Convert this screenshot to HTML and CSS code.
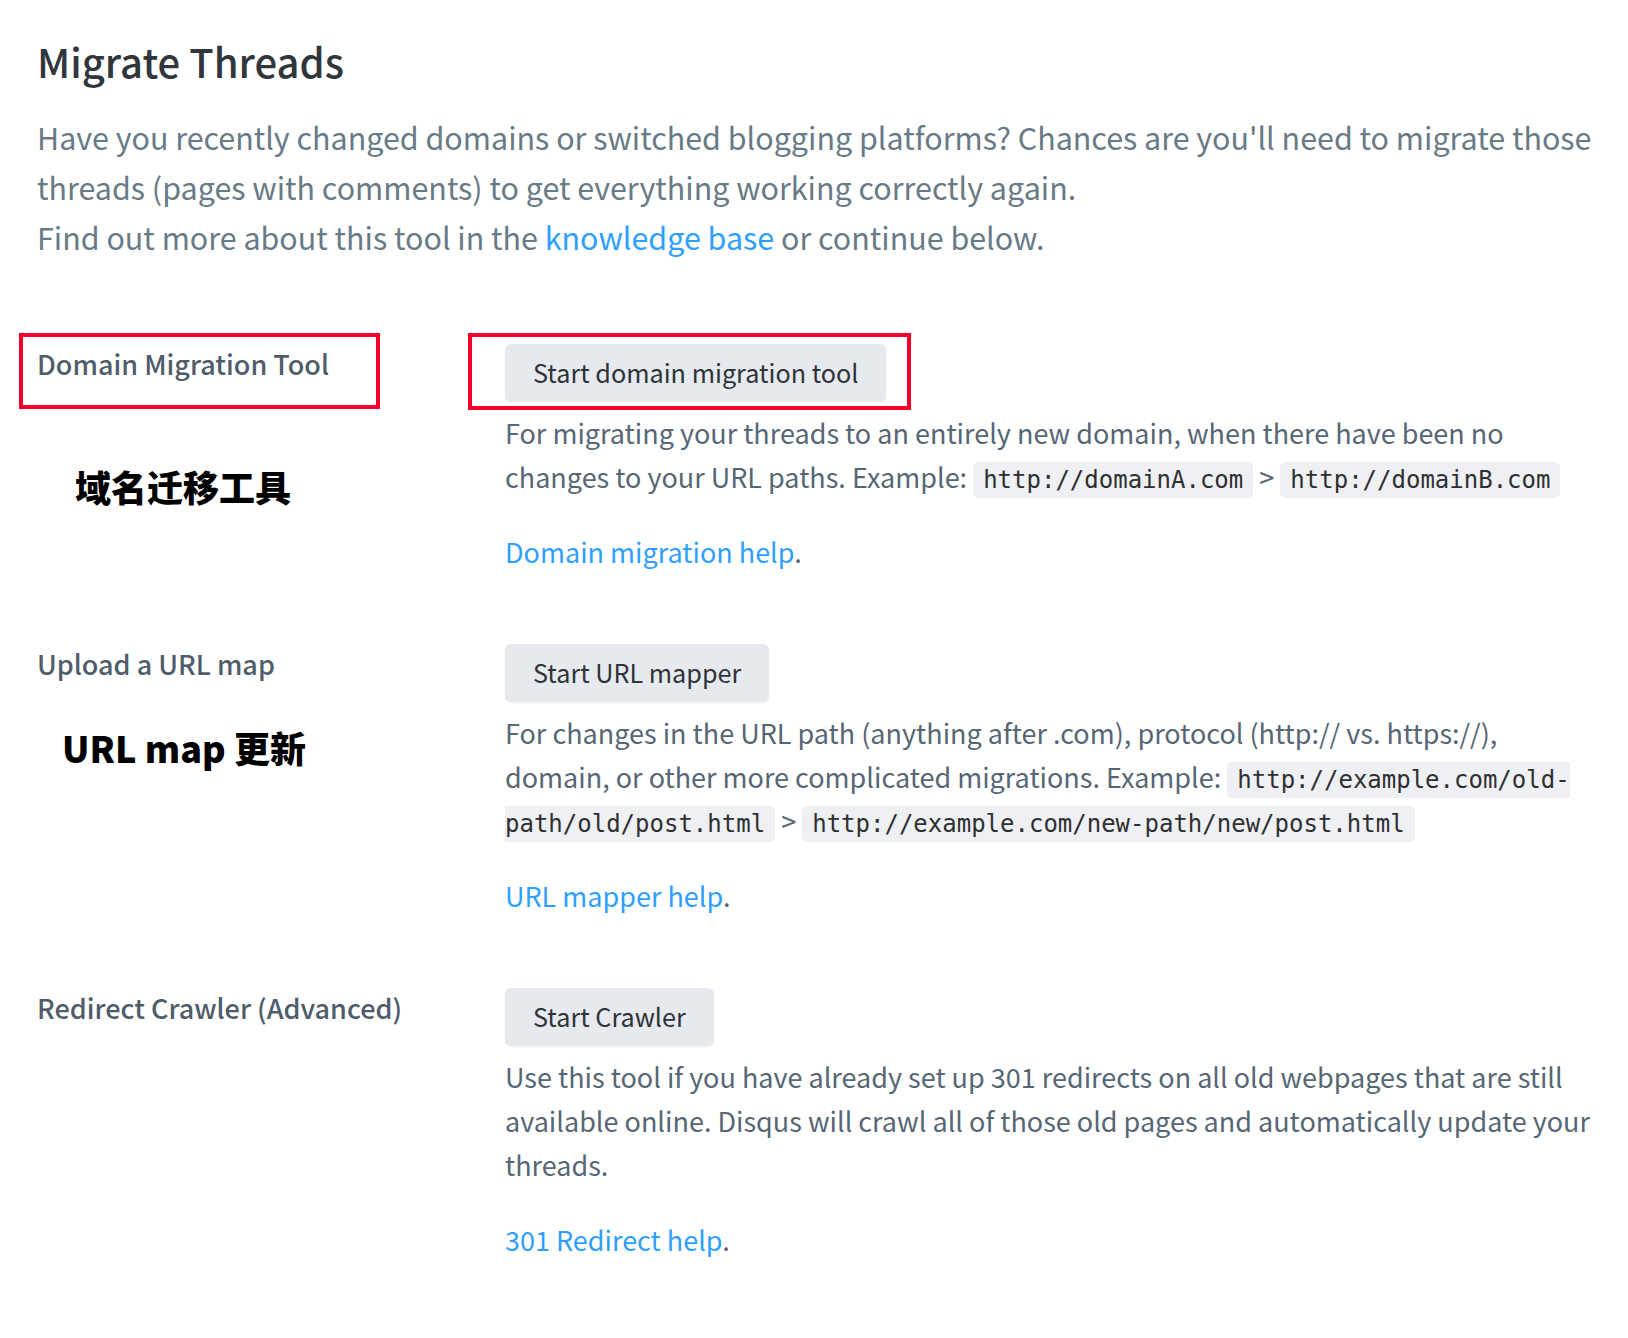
FILE: index.html
```html
<!DOCTYPE html>
<html lang="en">
<head>
<meta charset="utf-8">
<title>Migrate Threads</title>
<link rel="stylesheet" href="styles.css">
</head>
<body>
<div class="page">
  <h1 class="title">Migrate Threads</h1>
  <p class="intro">Have you recently changed domains or switched blogging platforms? Chances are you'll need to migrate those threads (pages with comments) to get everything working correctly again.<br>Find out more about this tool in the <a class="link" href="#">knowledge base</a> or continue below.</p>

  <section class="tool tool-first">
    <div class="label">Domain Migration Tool</div>
    <div class="content">
      <button class="btn" type="button">Start domain migration tool</button>
      <p class="desc">For migrating your threads to an entirely new domain, when there have been no changes to your URL paths. Example: <code class="code">http://domainA.com</code> &gt; <code class="code">http://domainB.com</code></p>
      <p class="help"><a class="link" href="#">Domain migration help</a>.</p>
    </div>
    <div class="mark mark-label"></div>
    <div class="mark mark-btn"></div>
    <div class="note note-1">域名迁移工具</div>
  </section>

  <section class="tool">
    <div class="label">Upload a URL map</div>
    <div class="content">
      <button class="btn" type="button">Start URL mapper</button>
      <p class="desc">For changes in the URL path (anything after .com), protocol (http:// vs. https://), domain, or other more complicated migrations. Example: <code class="code">http://example.com/old-path/old/post.html</code> &gt; <code class="code">http://example.com/new-path/new/post.html</code></p>
      <p class="help"><a class="link" href="#">URL mapper help</a>.</p>
    </div>
    <div class="note note-2">URL map 更新</div>
  </section>

  <section class="tool">
    <div class="label">Redirect Crawler (Advanced)</div>
    <div class="content">
      <button class="btn" type="button">Start Crawler</button>
      <p class="desc">Use this tool if you have already set up 301 redirects on all old webpages that are still available online. Disqus will crawl all of those old pages and automatically update your threads.</p>
      <p class="help"><a class="link" href="#">301 Redirect help</a>.</p>
    </div>
  </section>
</div>
</body>
</html>
```

FILE: styles.css
```css
html, body {
  margin: 0;
  padding: 0;
  background: #ffffff;
}

body {
  font-family: "Noto Sans CJK SC", "Noto Sans", sans-serif;
  color: #566675;
}

.page {
  padding: 35px 8px 40px 37px;
}

.title {
  margin: 0 0 25px;
  font-size: 40px;
  line-height: 52px;
  font-weight: 500;
  color: #30363b;
}

.intro {
  margin: 0;
  font-size: 30.45px;
  line-height: 50px;
  color: #687a86;
}

.link {
  color: #2e9fff;
  text-decoration: none;
}

.tool {
  position: relative;
  display: grid;
  grid-template-columns: 468px 1086px;
  margin-top: 70px;
}

.tool-first {
  margin-top: 82px;
}

.label {
  font-size: 27px;
  line-height: 40px;
  font-weight: 500;
  color: #4f5d6b;
}

.content {
  display: flex;
  flex-direction: column;
  align-items: flex-start;
}

.btn {
  box-sizing: border-box;
  height: 58px;
  padding: 6px 28px 8px;
  border: none;
  border-radius: 6px;
  background: #e6e9ee;
  color: #2e3338;
  font-family: inherit;
  font-size: 25.2px;
  line-height: 44px;
  font-weight: 400;
  box-shadow: 0 1px 2px rgba(0, 0, 0, 0.06);
}

.desc {
  margin: 9px 0 31px;
  font-size: 27px;
  line-height: 44px;
  color: #566675;
}

.help {
  margin: 0;
  font-size: 27px;
  line-height: 44px;
  color: #566675;
}

.code {
  font-family: "DejaVu Sans Mono", "Liberation Mono", monospace;
  font-size: 24px;
  line-height: 1;
  color: #2e2f30;
  background: #eef0f3;
  padding: 4px 10px;
  border-radius: 5px;
}

.mark {
  position: absolute;
  top: -11px;
  height: 76px;
  box-sizing: border-box;
  border: 4px solid #f5002d;
}

.mark-label {
  left: -18px;
  width: 361px;
}

.mark-btn {
  left: 431px;
  width: 443px;
  height: 77px;
}

.note {
  position: absolute;
  font-size: 36px;
  line-height: 36px;
  font-weight: 900;
  color: #000000;
  white-space: nowrap;
}

.note-1 {
  left: 38px;
  top: 124px;
}

.note-2 {
  left: 25px;
  top: 85px;
}
```
